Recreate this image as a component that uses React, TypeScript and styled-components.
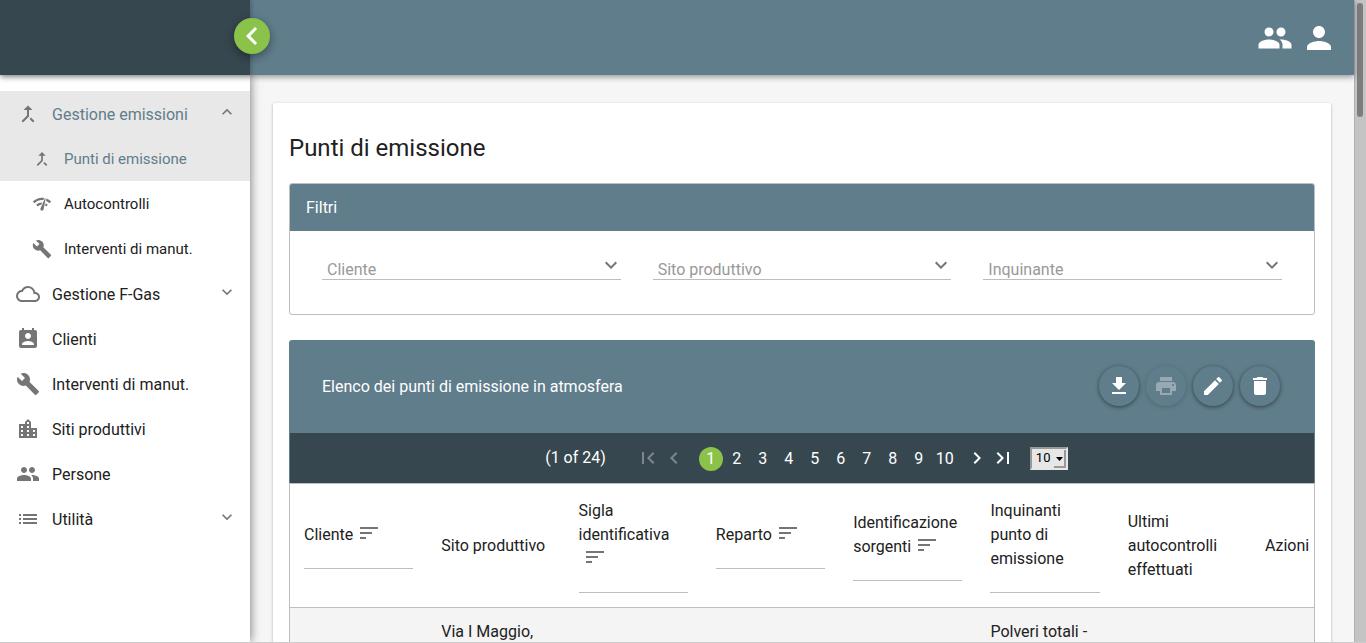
import React, { useState } from "react";
import styled, { createGlobalStyle, css } from "styled-components";
import type { IconType } from "react-icons";
import {
  MdBuild,
  MdCallMerge,
  MdChevronLeft,
  MdChevronRight,
  MdCloudQueue,
  MdDelete,
  MdEdit,
  MdExpandLess,
  MdExpandMore,
  MdFileDownload,
  MdFirstPage,
  MdLastPage,
  MdList,
  MdLocationCity,
  MdNetworkCheck,
  MdPeople,
  MdPermContactCalendar,
  MdPerson,
  MdPrint,
  MdSort,
} from "react-icons/md";

const steel = "#607d8b";
const slate = "#37474f";
const green = "#8bc34a";
const line = "#bdbdbd";
const grey = "#757575";
const ink = "#212121";

const GlobalStyle = createGlobalStyle`
  *, *::before, *::after { box-sizing: border-box; }
  body {
    margin: 0;
    font-family: Roboto, "Liberation Sans", sans-serif;
    font-size: 16px;
    line-height: 24px;
    color: ${ink};
    background: #f6f6f6;
  }
  button, select, input { font: inherit; color: inherit; }
  svg { display: block; flex: none; }
`;

const Shell = styled.div`
  display: flex;
  height: 100vh;
  overflow: hidden;
  border-bottom: 1px solid #cccccc;
`;

const Page = styled.div`
  flex: 1;
  min-width: 0;
  display: flex;
  flex-direction: column;
`;

const TopBar = styled.header`
  position: relative;
  z-index: 2;
  flex: none;
  display: flex;
  height: 75px;
  background: ${steel};
  box-shadow: 0 2px 6px rgba(0, 0, 0, 0.4);
`;

const Brand = styled.div`
  position: relative;
  width: 250px;
  background: ${slate};
  box-shadow: 1px 0 5px rgba(0, 0, 0, 0.25);
`;

const ToggleButton = styled.button`
  position: absolute;
  top: 18px;
  right: -20px;
  display: grid;
  place-items: center;
  width: 36px;
  height: 36px;
  padding: 0;
  border: 0;
  border-radius: 50%;
  background: ${green};
  color: #fff;
  box-shadow: 0 3px 10px rgba(0, 0, 0, 0.4);
`;

const TopActions = styled.div`
  flex: 1;
  display: flex;
  align-items: center;
  justify-content: flex-end;
  gap: 8px;
  padding-right: 17px;
`;

const TopButton = styled.button`
  padding: 0;
  border: 0;
  background: none;
  color: #fff;
`;

const Body = styled.div`
  flex: 1;
  min-height: 0;
  display: flex;
`;

const Sidebar = styled.nav`
  position: relative;
  z-index: 1;
  flex: none;
  width: 250px;
  padding-top: 16px;
  background: #fff;
  box-shadow: 0 0 10px rgba(0, 0, 0, 0.55);
`;

const MenuList = styled.ul`
  margin: 0;
  padding: 0;
  list-style: none;
`;

const MenuLink = styled.a<{ $sub?: boolean; $active?: boolean }>`
  display: flex;
  align-items: center;
  gap: 12px;
  height: 45px;
  padding: 0 13px 0 ${(p) => (p.$sub ? 32 : 16)}px;
  font-size: ${(p) => (p.$sub ? 15 : 16)}px;
  text-decoration: none;
  color: ${(p) => (p.$active ? steel : ink)};
  background: ${(p) => (p.$active ? "#e8e8e8" : "transparent")};
  svg { color: ${grey}; }
`;

const MenuText = styled.span<{ $sub?: boolean }>`
  flex: 1;
  padding-top: ${(p) => (p.$sub ? 0 : 2)}px;
`;

const MenuArrow = styled.span`
  margin-bottom: 3px;
`;

const Content = styled.main`
  flex: 1;
  min-width: 0;
  overflow: hidden;
  padding: 28px 23px 0;
`;

const Card = styled.section`
  min-height: 100%;
  padding: 31px 16px 0;
  background: #fff;
  border-radius: 2px;
  box-shadow: 0 1px 3px rgba(0, 0, 0, 0.3);
`;

const Title = styled.h1`
  margin: 0 0 21px;
  font-size: 24px;
  line-height: 28px;
  font-weight: 400;
`;

const Panel = styled.section`
  margin-bottom: 25px;
  border: 1px solid ${line};
  border-radius: 3px;
  overflow: hidden;
`;

const PanelHeader = styled.h2`
  margin: 0;
  padding: 12px 16px 11px;
  font-size: 16px;
  font-weight: 400;
  color: #fff;
  background: ${steel};
`;

const Filters = styled.form`
  display: grid;
  grid-template-columns: repeat(3, 1fr);
  gap: 32px;
  padding: 25px 32px 34px;
`;

const FilterField = styled.div`
  position: relative;
  svg {
    position: absolute;
    top: -3px;
    right: -2px;
    color: ${grey};
    pointer-events: none;
  }
`;

const FilterSelect = styled.select`
  display: block;
  appearance: none;
  width: 100%;
  height: 24px;
  padding: 2px 24px 0 5px;
  border: 0;
  border-bottom: 1px solid ${line};
  border-radius: 0;
  background: none;
  color: #999;
`;

const TablePanel = styled.section`
  border-radius: 3px 3px 0 0;
  overflow: hidden;
`;

const TableHeader = styled.header`
  display: flex;
  align-items: center;
  justify-content: space-between;
  height: 93px;
  padding: 0 35px 0 33px;
  color: #fff;
  background: ${steel};
`;

const TableTitle = styled.h2`
  margin: 0;
  font-size: 16px;
  font-weight: 400;
`;

const Actions = styled.div`
  display: flex;
  gap: 7px;
  margin-bottom: 1px;
`;

const ActionButton = styled.button`
  display: grid;
  place-items: center;
  width: 40px;
  height: 40px;
  padding: 0;
  border: 0;
  border-radius: 50%;
  color: #fff;
  background: ${steel};
  box-shadow: 0 1px 4px rgba(0, 0, 0, 0.5);
  &:disabled { opacity: 0.35; }
`;

const Paginator = styled.div`
  display: flex;
  align-items: center;
  justify-content: center;
  height: 50px;
  padding-left: 9px;
  border: solid ${steel};
  border-width: 0 1px;
  color: #fff;
  background: ${slate};
`;

const PageStatus = styled.span`
  margin-right: 30px;
`;

const PageGroup = styled.div`
  display: flex;
  gap: 2px;
`;

const PageNumbers = styled(PageGroup)`
  margin: 2px 8px 0 13px;
`;

const PageButton = styled.button<{ $active?: boolean }>`
  display: grid;
  place-items: center;
  width: 24px;
  height: 24px;
  padding: 0;
  border: 0;
  border-radius: 50%;
  color: #fff;
  background: ${(p) => (p.$active ? green : "transparent")};
  &:disabled { opacity: 0.35; }
`;

const RowsField = styled.div`
  position: relative;
  margin-left: 15px;
  svg {
    position: absolute;
    top: 3px;
    right: 2px;
    pointer-events: none;
  }
`;

const RowsSelect = styled.select`
  display: block;
  appearance: none;
  width: 38px;
  height: 23px;
  padding: 0 0 2px 4px;
  border: 2px solid;
  border-color: #999 #e7e7e7 #e7e7e7 #999;
  border-radius: 0;
  font-size: 13px;
  line-height: 17px;
  color: #000;
  background: #e7e7e7;
`;

const Table = styled.table`
  width: 100%;
  table-layout: fixed;
  border: solid ${line};
  border-width: 0 1px;
  border-collapse: separate;
  border-spacing: 0;
`;

const HeadCell = styled.th<{ $width?: number }>`
  ${(p) => p.$width && css`width: ${p.$width}px;`}
  padding: 15px 14px 14px;
  border-top: 1px solid ${line};
  border-bottom: 1px solid ${line};
  font-weight: 400;
  text-align: left;
  vertical-align: middle;
`;

const SortButton = styled.button`
  display: inline-block;
  margin: -2px 0 0 4px;
  padding: 0;
  border: 0;
  background: none;
  color: ${grey};
  vertical-align: top;
`;

const ColumnFilter = styled.input`
  display: block;
  width: 100%;
  height: 22px;
  padding: 0;
  border: 0;
  border-bottom: 1px solid ${line};
  background: none;
`;

const Cell = styled.td`
  height: 120px;
  padding: 12px 14px;
  vertical-align: top;
  background: #f4f4f4;
`;

const ScrollTrack = styled.div`
  flex: none;
  width: 12px;
  padding: 3px 3px 3px 2px;
  border-left: 1px solid #b0b0b0;
  background: #c3c4c3;
`;

const ScrollThumb = styled.div`
  width: 6px;
  height: 114px;
  border-radius: 3px;
  background: #7a7e7f;
`;

type MenuEntry = {
  label: string;
  icon: IconType;
  sub?: boolean;
  active?: boolean;
  expand?: "open" | "closed";
};

const menu: MenuEntry[] = [
  { label: "Gestione emissioni", icon: MdCallMerge, active: true, expand: "open" },
  { label: "Punti di emissione", icon: MdCallMerge, sub: true, active: true },
  { label: "Autocontrolli", icon: MdNetworkCheck, sub: true },
  { label: "Interventi di manut.", icon: MdBuild, sub: true },
  { label: "Gestione F-Gas", icon: MdCloudQueue, expand: "closed" },
  { label: "Clienti", icon: MdPermContactCalendar },
  { label: "Interventi di manut.", icon: MdBuild },
  { label: "Siti produttivi", icon: MdLocationCity },
  { label: "Persone", icon: MdPeople },
  { label: "Utilità", icon: MdList, expand: "closed" },
];

const columns = [
  { label: "Cliente", sort: true, filter: true },
  { label: "Sito produttivo" },
  { label: "Sigla identificativa", sort: true, filter: true },
  { label: "Reparto", sort: true, filter: true },
  { label: "Identificazione sorgenti", sort: true, filter: true },
  { label: "Inquinanti punto di emissione", filter: true },
  { label: "Ultimi autocontrolli effettuati" },
  { label: "Azioni", width: 63 },
];

const rows = [["", "Via I Maggio,", "", "", "", "Polveri totali -", "", ""]];

const filters = ["Cliente", "Sito produttivo", "Inquinante"];

export default function App() {
  const [page, setPage] = useState(1);

  return (
    <>
      <GlobalStyle />
      <Shell>
        <Page>
          <TopBar>
            <Brand>
              <ToggleButton type="button" aria-label="Chiudi menu">
                <MdChevronLeft size={36} />
              </ToggleButton>
            </Brand>
            <TopActions>
              <TopButton type="button" aria-label="Utenti">
                <MdPeople size={36} />
              </TopButton>
              <TopButton type="button" aria-label="Profilo">
                <MdPerson size={36} />
              </TopButton>
            </TopActions>
          </TopBar>
          <Body>
            <Sidebar>
              <MenuList>
                {menu.map(({ label, icon: Icon, sub, active, expand }, i) => (
                  <li key={i}>
                    <MenuLink href="#" $sub={sub} $active={active}>
                      <Icon size={sub ? 20 : 24} />
                      <MenuText $sub={sub}>{label}</MenuText>
                      {expand && (
                        <MenuArrow>
                          {expand === "open" ? <MdExpandLess size={20} /> : <MdExpandMore size={20} />}
                        </MenuArrow>
                      )}
                    </MenuLink>
                  </li>
                ))}
              </MenuList>
            </Sidebar>
            <Content>
              <Card>
                <Title>Punti di emissione</Title>
                <Panel>
                  <PanelHeader>Filtri</PanelHeader>
                  <Filters>
                    {filters.map((name) => (
                      <FilterField key={name}>
                        <FilterSelect aria-label={name}>
                          <option>{name}</option>
                        </FilterSelect>
                        <MdExpandMore size={24} />
                      </FilterField>
                    ))}
                  </Filters>
                </Panel>
                <TablePanel>
                  <TableHeader>
                    <TableTitle>Elenco dei punti di emissione in atmosfera</TableTitle>
                    <Actions>
                      <ActionButton type="button" aria-label="Scarica">
                        <MdFileDownload size={24} />
                      </ActionButton>
                      <ActionButton type="button" aria-label="Stampa" disabled>
                        <MdPrint size={24} />
                      </ActionButton>
                      <ActionButton type="button" aria-label="Modifica">
                        <MdEdit size={24} />
                      </ActionButton>
                      <ActionButton type="button" aria-label="Elimina">
                        <MdDelete size={24} />
                      </ActionButton>
                    </Actions>
                  </TableHeader>
                  <Paginator>
                    <PageStatus>({page} of 24)</PageStatus>
                    <PageGroup>
                      <PageButton type="button" aria-label="Prima pagina" disabled={page === 1} onClick={() => setPage(1)}>
                        <MdFirstPage size={24} />
                      </PageButton>
                      <PageButton type="button" aria-label="Pagina precedente" disabled={page === 1} onClick={() => setPage(page - 1)}>
                        <MdChevronLeft size={24} />
                      </PageButton>
                    </PageGroup>
                    <PageNumbers>
                      {Array.from({ length: 10 }, (_, i) => i + 1).map((n) => (
                        <PageButton key={n} type="button" $active={n === page} onClick={() => setPage(n)}>
                          {n}
                        </PageButton>
                      ))}
                    </PageNumbers>
                    <PageGroup>
                      <PageButton type="button" aria-label="Pagina successiva" onClick={() => setPage(Math.min(24, page + 1))}>
                        <MdChevronRight size={24} />
                      </PageButton>
                      <PageButton type="button" aria-label="Ultima pagina" onClick={() => setPage(24)}>
                        <MdLastPage size={24} />
                      </PageButton>
                    </PageGroup>
                    <RowsField>
                      <RowsSelect aria-label="Righe per pagina">
                        <option>10</option>
                      </RowsSelect>
                      <svg width="12" height="18" viewBox="0 0 12 18">
                        <path d="M2 7h7l-3.500 4z" fill="#000" />
                        <path d="M0 17h11V0" fill="none" stroke="#999" strokeWidth="2" />
                      </svg>
                    </RowsField>
                  </Paginator>
                  <Table>
                    <thead>
                      <tr>
                        {columns.map(({ label, sort, filter, width }) => (
                          <HeadCell key={label} scope="col" $width={width}>
                            {label}
                            {sort && (
                              <SortButton type="button" aria-label={`Ordina per ${label}`}>
                                <MdSort size={24} />
                              </SortButton>
                            )}
                            {filter && <ColumnFilter type="text" aria-label={`Filtra per ${label}`} />}
                          </HeadCell>
                        ))}
                      </tr>
                    </thead>
                    <tbody>
                      {rows.map((cells, r) => (
                        <tr key={r}>
                          {cells.map((text, c) => (
                            <Cell key={c}>{text}</Cell>
                          ))}
                        </tr>
                      ))}
                    </tbody>
                  </Table>
                </TablePanel>
              </Card>
            </Content>
          </Body>
        </Page>
        <ScrollTrack aria-hidden="true">
          <ScrollThumb />
        </ScrollTrack>
      </Shell>
    </>
  );
}
